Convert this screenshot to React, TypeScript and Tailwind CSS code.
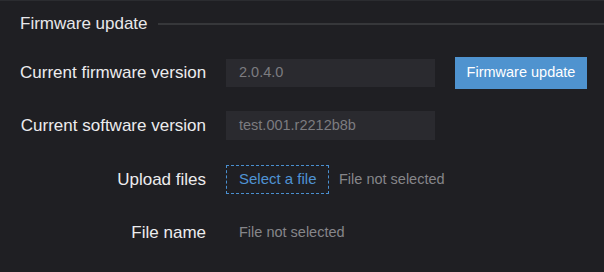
import React from "react";

export default function App() {
  return (
    <div
      className="w-[604px] h-[272px] bg-[#1f1f23] border-t border-[#2b2c30] overflow-hidden text-[17px]"
      style={{ fontFamily: '"Liberation Sans", Arial, sans-serif' }}
    >
      <div className="flex items-center pl-5 h-[47px] -mt-px">
        <span className="text-[#e8e8ea] text-[17px] leading-none">Firmware update</span>
        <div className="flex-1 ml-[10px] h-[2px] bg-[#36373a]" />
      </div>
      <div className="flex flex-col pl-5">
        <div className="flex items-center h-[32px] mt-[10px]">
          <div className="w-[186px] text-right text-[#ececee] whitespace-nowrap">Current firmware version</div>
          <div className="ml-5 w-[209px] h-[28px] bg-[#2a2a2f] flex items-center px-[13px] text-[#7c7c80] text-[14.5px]">2.0.4.0</div>
          <button className="ml-5 w-[132px] h-[32px] bg-[#4f93cf] text-white text-[14.5px]">Firmware update</button>
        </div>
        <div className="flex items-center h-[29px] mt-[22px]">
          <div className="w-[186px] text-right text-[#ececee] whitespace-nowrap">Current software version</div>
          <div className="ml-5 w-[209px] h-[29px] bg-[#2a2a2f] flex items-center px-[13px] text-[#7c7c80] text-[14.5px]">test.001.r2212b8b</div>
        </div>
        <div className="flex items-center h-[29px] mt-[25px]">
          <div className="w-[186px] text-right text-[#ececee]">Upload files</div>
          <div className="ml-5 w-[103px] h-[29px] border border-dashed border-[#4a8fd0] flex items-center pl-[12px] text-[#4f93d4] text-[15px] whitespace-nowrap">Select a file</div>
          <div className="ml-[10px] text-[#86868a] text-[14.5px]">File not selected</div>
        </div>
        <div className="flex items-center h-[28px] mt-[25px]">
          <div className="w-[186px] text-right text-[#ececee]">File name</div>
          <div className="ml-5 pl-[13px] text-[#86868a] text-[14.5px]">File not selected</div>
        </div>
      </div>
    </div>
  );
}
